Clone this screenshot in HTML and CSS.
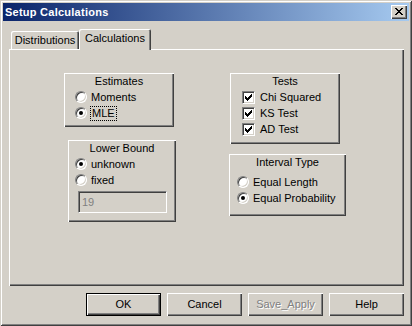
FILE: index.html
```html
<!DOCTYPE html>
<html>
<head>
<meta charset="utf-8">
<link rel="stylesheet" href="styles.css">
</head>
<body>
<div class="window">
  <div class="titlebar">
    <span class="title">Setup Calculations</span>
    <span class="close">
      <svg width="8" height="7" viewBox="0 0 8 7" shape-rendering="crispEdges">
        <rect x="0" y="0" width="2" height="1"/><rect x="6" y="0" width="2" height="1"/>
        <rect x="1" y="1" width="2" height="1"/><rect x="5" y="1" width="2" height="1"/>
        <rect x="2" y="2" width="4" height="1"/>
        <rect x="3" y="3" width="2" height="1"/>
        <rect x="2" y="4" width="4" height="1"/>
        <rect x="1" y="5" width="2" height="1"/><rect x="5" y="5" width="2" height="1"/>
        <rect x="0" y="6" width="2" height="1"/><rect x="6" y="6" width="2" height="1"/>
      </svg>
    </span>
  </div>
  <div class="content">
    <div class="tabs">
      <div class="tab">Distributions</div>
      <div class="tab active">Calculations</div>
    </div>
    <div class="panel">
      <div class="col col-left">
        <div class="group estimates">
          <div class="gtitle">Estimates</div>
          <div class="opt"><span class="radio"></span><span>Moments</span></div>
          <div class="opt"><span class="radio on"></span><span class="focus">MLE</span></div>
        </div>
        <div class="group lower">
          <div class="gtitle">Lower Bound</div>
          <div class="opt"><span class="radio on"></span><span>unknown</span></div>
          <div class="opt"><span class="radio"></span><span>fixed</span></div>
          <div class="field">19</div>
        </div>
      </div>
      <div class="col col-right">
        <div class="group tests">
          <div class="gtitle">Tests</div>
          <div class="opt"><span class="check"><svg width="7" height="7" viewBox="0 0 7 7" shape-rendering="crispEdges"><rect x="0" y="2" width="1" height="3"/><rect x="1" y="3" width="1" height="3"/><rect x="2" y="4" width="1" height="3"/><rect x="3" y="3" width="1" height="3"/><rect x="4" y="2" width="1" height="3"/><rect x="5" y="1" width="1" height="3"/><rect x="6" y="0" width="1" height="3"/></svg></span><span>Chi Squared</span></div>
          <div class="opt"><span class="check"><svg width="7" height="7" viewBox="0 0 7 7" shape-rendering="crispEdges"><rect x="0" y="2" width="1" height="3"/><rect x="1" y="3" width="1" height="3"/><rect x="2" y="4" width="1" height="3"/><rect x="3" y="3" width="1" height="3"/><rect x="4" y="2" width="1" height="3"/><rect x="5" y="1" width="1" height="3"/><rect x="6" y="0" width="1" height="3"/></svg></span><span>KS Test</span></div>
          <div class="opt"><span class="check"><svg width="7" height="7" viewBox="0 0 7 7" shape-rendering="crispEdges"><rect x="0" y="2" width="1" height="3"/><rect x="1" y="3" width="1" height="3"/><rect x="2" y="4" width="1" height="3"/><rect x="3" y="3" width="1" height="3"/><rect x="4" y="2" width="1" height="3"/><rect x="5" y="1" width="1" height="3"/><rect x="6" y="0" width="1" height="3"/></svg></span><span>AD Test</span></div>
        </div>
        <div class="group interval">
          <div class="gtitle">Interval Type</div>
          <div class="opt first"><span class="radio"></span><span>Equal Length</span></div>
          <div class="opt"><span class="radio on"></span><span>Equal Probability</span></div>
        </div>
      </div>
    </div>
    <div class="buttons">
      <div class="btn default">OK</div>
      <div class="btn">Cancel</div>
      <div class="btn disabled">Save_Apply</div>
      <div class="btn">Help</div>
    </div>
  </div>
</div>
</body>
</html>
```
FILE: styles.css
```css
* { box-sizing: border-box; }
html, body { margin: 0; padding: 0; }
body {
  width: 412px;
  height: 326px;
  overflow: hidden;
  background: #d4d0c8;
  font-family: "Liberation Sans", Arial, sans-serif;
  font-size: 11px;
  color: #000;
}
.window {
  width: 412px;
  height: 326px;
  padding: 3px;
  background: #d4d0c8;
  box-shadow: inset 1px 1px 0 #d4d0c8, inset -1px -1px 0 #404040, inset 2px 2px 0 #fff, inset -2px -2px 0 #808080;
  display: flex;
  flex-direction: column;
}
.titlebar {
  height: 18px;
  background: linear-gradient(to right, #0a246a, #a6caf0);
  display: flex;
  align-items: center;
  justify-content: space-between;
  padding: 0 2px 0 2px;
}
.title {
  color: #fff;
  font-weight: bold;
  font-size: 11px;
  letter-spacing: 0.25px;
}
.close {
  width: 16px;
  height: 14px;
  background: #d4d0c8;
  box-shadow: inset 1px 1px 0 #fff, inset -1px -1px 0 #404040, inset -2px -2px 0 #808080;
  display: flex;
  align-items: center;
  justify-content: center;
  padding: 0 1px 1px 0;
}
.content {
  flex: 1;
  padding: 8px 5px 0 6px;
}
.tabs {
  display: flex;
  align-items: flex-end;
  height: 20px;
  padding-left: 2px;
}
.tab {
  width: 68px;
  height: 18px;
  line-height: 18px;
  text-align: center;
  border-radius: 2px 2px 0 0;
  box-shadow: inset 1px 1px 0 #fff, inset -1px 0 0 #404040, inset -2px 0 0 #808080;
}
.tab.active {
  position: relative;
  z-index: 1;
  width: 72px;
  height: 21px;
  margin-bottom: -1px;
  line-height: 18px;
  background: #d4d0c8;
}
.panel {
  height: 237px;
  box-shadow: inset 1px 1px 0 #fff, inset -1px -1px 0 #404040, inset -2px -2px 0 #808080;
  display: flex;
  padding: 24px 0 0 55px;
}
.col { display: flex; flex-direction: column; }
.col-left { width: 112px; }
.col-right { margin-left: 54px; }
.group {
  box-shadow: inset 1px 1px 0 #fff, inset -1px -1px 0 #404040, inset -2px -2px 0 #808080;
}
.gtitle {
  text-align: center;
  line-height: 16px;
}
.opt {
  display: flex;
  align-items: center;
  height: 16px;
  gap: 4px;
}
.estimates { width: 110px; height: 54px; }
.estimates .opt { margin-left: 11px; }
.lower { width: 108px; height: 82px; margin: 13px 0 0 4px; }
.lower .opt { margin-left: 7px; }
.tests { width: 110px; height: 71px; margin-left: 0; }
.tests .opt { margin-left: 12px; gap: 5px; }
.interval { width: 117px; height: 62px; margin: 10px 0 0 -1px; }
.interval .opt { margin-left: 8px; }
.interval .opt.first { margin-top: 4px; }
.radio {
  position: relative;
  width: 12px;
  height: 12px;
  flex: none;
  border-radius: 50%;
  background: #fff;
  border: 1px solid;
  border-color: #808080 #fff #fff #808080;
  box-shadow: inset 1px 1px 0 #404040, inset -1px -1px 0 #d4d0c8;
}
.radio.on::after {
  content: "";
  position: absolute;
  left: 3px;
  top: 3px;
  width: 4px;
  height: 4px;
  border-radius: 50%;
  background: #000;
}
.focus {
  outline: 1px dotted #000;
  outline-offset: 0;
  padding: 0 1px;
  line-height: 13px;
}
.check {
  width: 13px;
  height: 13px;
  flex: none;
  background: #fff;
  border: 1px solid;
  border-color: #808080 #fff #fff #808080;
  box-shadow: inset 1px 1px 0 #404040, inset -1px -1px 0 #d4d0c8;
  display: flex;
  align-items: center;
  justify-content: center;
}
.field {
  width: 89px;
  height: 22px;
  margin: 3px 0 0 10px;
  border: 1px solid;
  border-color: #808080 #fff #fff #808080;
  box-shadow: inset 1px 1px 0 #404040, inset -1px -1px 0 #d4d0c8;
  color: #808080;
  line-height: 20px;
  padding-left: 3px;
}
.buttons {
  display: flex;
  justify-content: flex-end;
  gap: 6px;
  margin-top: 7px;
}
.btn {
  width: 75px;
  height: 23px;
  line-height: 23px;
  text-align: center;
  box-shadow: inset 1px 1px 0 #fff, inset -1px -1px 0 #404040, inset -2px -2px 0 #808080;
}
.btn.default {
  border: 1px solid #000;
  line-height: 21px;
  box-shadow: inset 1px 1px 0 #fff, inset -1px -1px 0 #404040, inset -2px -2px 0 #808080;
}
.btn.disabled {
  color: #808080;
  text-shadow: 1px 1px 0 #fff;
}
```
